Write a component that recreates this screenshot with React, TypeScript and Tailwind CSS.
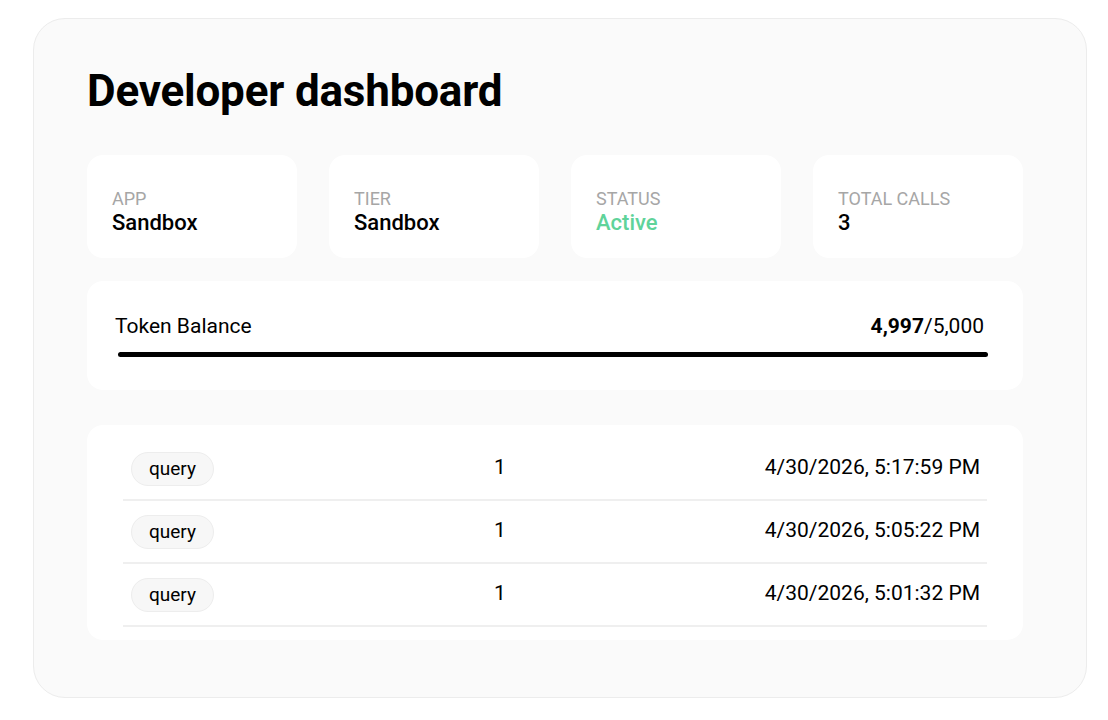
const stats = [
  { label: "App", value: "Sandbox", color: "text-black" },
  { label: "Tier", value: "Sandbox", color: "text-black" },
  { label: "Status", value: "Active", color: "text-[#5fd39a]" },
  { label: "Total Calls", value: "3", color: "text-black" },
];

const calls = [
  { type: "query", n: 1, at: "4/30/2026, 5:17:59 PM" },
  { type: "query", n: 1, at: "4/30/2026, 5:05:22 PM" },
  { type: "query", n: 1, at: "4/30/2026, 5:01:32 PM" },
];

export default function App() {
  return (
    <main className="min-h-screen bg-white pt-[18px] pl-[33px] pr-[21px] font-[Roboto,sans-serif] text-black">
      <div className="h-[680px] rounded-[32px] border border-[#ececec] bg-[#fafafa] pl-[53px] pr-[63px] pt-[46px]">
        <h1 className="text-[44px] font-bold leading-[52px] tracking-[-0.2px]">Developer dashboard</h1>

        {/* stats */}
        <div className="mt-[38px] grid grid-cols-4 gap-[32px]">
          {stats.map((s) => (
            <div key={s.label} className="h-[103px] rounded-[16px] bg-white px-[25px] pt-[33px]">
              <div className="text-[18px] uppercase leading-[22px] text-[#a6a6a6]">{s.label}</div>
              <div className={`text-[22px] font-medium leading-[26px] ${s.color}`}>{s.value}</div>
            </div>
          ))}
        </div>

        {/* token balance */}
        <div className="mt-[23px] h-[109px] rounded-[16px] bg-white pl-[28px] pr-[35px] pt-[32px]">
          <div className="flex items-baseline justify-between pr-[4px] text-[21px] leading-[26px]">
            <span>Token Balance</span>
            <span>
              <b className="font-bold">4,997</b>/5,000
            </span>
          </div>
          <div className="ml-[3px] mt-[13px] h-[5px] rounded-full bg-black" />
        </div>

        {/* recent calls */}
        <div className="mt-[35px] rounded-[16px] bg-white px-[36px] pt-[13px] pb-[13px]">
          {calls.map((c, i) => (
            <div key={i} className="grid h-[63px] grid-cols-3 items-center border-b-2 border-[#efefef] pl-[8px] pr-[7px] text-[21px]">
              <div>
                <span className="inline-block rounded-full border border-[#ededed] bg-[#f7f7f7] px-[17px] py-[3px] text-[19px] leading-[26px]">
                  {c.type}
                </span>
              </div>
              <div className="pl-[80px] pb-[2px]">{c.n}</div>
              <div className="text-right pb-[2px]">{c.at}</div>
            </div>
          ))}
        </div>
      </div>
    </main>
  );
}
